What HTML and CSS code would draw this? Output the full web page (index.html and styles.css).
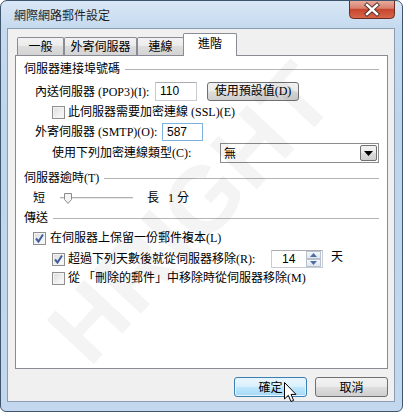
FILE: index.html
```html
<!DOCTYPE html>
<html lang="zh-Hant">
<head>
<meta charset="utf-8">
<title>網際網路郵件設定</title>
<link rel="stylesheet" href="styles.css">
</head>
<body>
<div class="window">
  <div class="titlebar">
    <span class="title">網際網路郵件設定</span>
    <div class="close">
      <svg width="46" height="19" viewBox="0 0 46 19">
        <defs>
          <linearGradient id="cg" x1="0" y1="0" x2="0" y2="1">
            <stop offset="0" stop-color="#eab1a4"/>
            <stop offset="0.45" stop-color="#d9806d"/>
            <stop offset="0.5" stop-color="#c7452d"/>
            <stop offset="1" stop-color="#d8684c"/>
          </linearGradient>
        </defs>
        <path d="M0.5 0 V14.5 a4 4 0 0 0 4 4 H41.5 a4 4 0 0 0 4 -4 V0" fill="url(#cg)" stroke="#6b2c22"/>
        <path d="M18 5 L28 14 M28 5 L18 14" stroke="#4a2a25" stroke-width="4.2" stroke-linecap="square"/>
        <path d="M18 5 L28 14 M28 5 L18 14" stroke="#ffffff" stroke-width="2.4" stroke-linecap="square"/>
      </svg>
    </div>
  </div>
  <div class="client">
    <div class="tabs">
      <div class="tab t1">一般</div>
      <div class="tab t2">外寄伺服器</div>
      <div class="tab t3">連線</div>
      <div class="tab active">進階</div>
    </div>
    <div class="panel">
      <div class="group"><span>伺服器連接埠號碼</span><i class="rule"></i></div>
      <div class="row r-in">
        <span class="lbl w-in">內送伺服器 (POP3)(I):</span>
        <div class="field f-in">110</div>
        <div class="pbtn">使用預設值(D)</div>
      </div>
      <div class="row r-ssl">
        <span class="cb"></span>
        <span class="cbt">此伺服器需要加密連線 (SSL)(E)</span>
      </div>
      <div class="row r-out">
        <span class="lbl w-out">外寄伺服器 (SMTP)(O):</span>
        <div class="field f-out">587</div>
      </div>
      <div class="row r-enc">
        <span class="lbl w-enc">使用下列加密連線類型(C):</span>
        <div class="select"><span>無</span>
          <span class="sarrow"><svg width="9" height="5" viewBox="0 0 9 5"><path d="M0 0 H9 L4.5 5 Z" fill="#000"/></svg></span>
        </div>
      </div>
      <div class="group g2"><span>伺服器逾時(T)</span><i class="rule"></i></div>
      <div class="row r-slider">
        <span class="s-short">短</span>
        <div class="slider">
          <i class="track"></i>
          <svg class="thumb" width="8" height="11" viewBox="0 0 8 11"><path d="M0.5 0.5 H7.5 V6.5 L4 10.5 L0.5 6.5 Z" fill="#f4f4f4" stroke="#8a8a8a"/></svg>
        </div>
        <span class="s-long">長</span>
        <span>1 分</span>
      </div>
      <div class="group g3"><span>傳送</span><i class="rule"></i></div>
      <div class="row r-cb1">
        <span class="cb checked"><svg width="11" height="11" viewBox="0 0 11 11"><path d="M2 5.5 L4.5 8.5 L9 1.5" fill="none" stroke="#3d5ea0" stroke-width="2"/></svg></span>
        <span class="cbt">在伺服器上保留一份郵件複本(L)</span>
      </div>
      <div class="row r-cb2">
        <span class="cb checked"><svg width="11" height="11" viewBox="0 0 11 11"><path d="M2 5.5 L4.5 8.5 L9 1.5" fill="none" stroke="#3d5ea0" stroke-width="2"/></svg></span>
        <span class="cbt w-cb2">超過下列天數後就從伺服器移除(R):</span>
        <div class="spin"><span>14</span>
          <span class="spinbtns">
            <span class="sb"><svg width="7" height="4" viewBox="0 0 7 4"><path d="M0 4 L3.5 0 L7 4 Z" fill="#4d6fa0"/></svg></span>
            <span class="sb"><svg width="7" height="4" viewBox="0 0 7 4"><path d="M0 0 L7 0 L3.5 4 Z" fill="#4d6fa0"/></svg></span>
          </span>
        </div>
        <span class="day">天</span>
      </div>
      <div class="row r-cb3">
        <span class="cb"></span>
        <span class="cbt">從 「刪除的郵件」中移除時從伺服器移除(M)</span>
      </div>
    </div>
    <div class="buttons">
      <div class="btn default">確定</div>
      <div class="btn">取消</div>
    </div>
  </div>
  <div class="watermark">HRIGHT</div>
  <svg class="cursor" width="14" height="22" viewBox="0 0 14 22"><path d="M0.5 0.5 V17 L4.3 13.3 L7 19.5 L9.6 18.4 L7 12.4 L12 12.4 Z" fill="#fff" stroke="#000" stroke-linejoin="round"/></svg>
</div>
</body>
</html>
```
FILE: styles.css
```css
* { box-sizing: border-box; }
html, body { margin: 0; padding: 0; }
body {
  width: 403px;
  height: 412px;
  overflow: hidden;
  background: #fff;
  font-family: "Liberation Serif", "Noto Sans CJK TC", serif;
  font-size: 12px;
  color: #000;
}
.window {
  position: relative;
  width: 403px;
  height: 412px;
  border: 1px solid #3f546d;
  border-radius: 7px 7px 6px 6px;
  background: linear-gradient(to bottom, #d9e7f6 0, #c6daef 26px, #bed5ec 120px, #c3d8ee 100%);
  padding: 0 7px 9px 6px;
  overflow: hidden;
}
.titlebar {
  height: 27px;
  padding-left: 7px;
  display: flex;
  align-items: center;
}
.title {
  font-family: "Noto Sans CJK TC", sans-serif;
  font-size: 12px;
  line-height: 14px;
  color: #1e1e1e;
  margin-top: 1px;
}
.close {
  position: absolute;
  top: -1px;
  right: 7px;
  width: 46px;
  height: 19px;
}
.close svg { display: block; }
.client {
  height: 374px;
  background: #f0f0f0;
  border: 1px solid #8c9db1;
  padding: 5px 0 0 7px;
}
.tabs {
  display: flex;
  align-items: flex-end;
  height: 21px;
  padding-left: 2px;
  position: relative;
  z-index: 2;
}
.tab {
  height: 18px;
  border: 1px solid #898c95;
  border-bottom: none;
  border-radius: 2px 2px 0 0;
  background: linear-gradient(to bottom, #f3f3f3 0, #ebebeb 45%, #dddddd 50%, #d4d4d4 100%);
  font-family: "Noto Sans CJK TC", sans-serif;
  line-height: 16px;
  text-align: center;
}
.t1 { width: 47px; }
.t2 { width: 73px; }
.t3 { width: 47px; }
.tab.active {
  width: 54px;
  height: 23px;
  margin-left: -1px;
  margin-bottom: -1px;
  background: #fff;
  line-height: 18px;
  position: relative;
}
.panel {
  height: 314px;
  margin-right: 6px;
  background: #fff;
  border: 1px solid #898c95;
  padding-top: 6px;
}
.group {
  display: flex;
  align-items: center;
  height: 14px;
  line-height: 14px;
  padding: 0 8px 0 8px;
}
.rule {
  flex: 1;
  height: 1px;
  background: #b5b5b5;
  margin-left: 5px;
}
.g2 { margin-top: 8px; }
.g3 { margin-top: 6px; }
.row {
  display: flex;
  align-items: center;
  line-height: 14px;
  white-space: nowrap;
}
.r-in { margin-top: 6px; height: 19px; padding-left: 19px; }
.w-in { width: 120px; }
.field {
  height: 19px;
  border: 1px solid #c8ccd2;
  border-top-color: #abadb3;
  background: #fff;
  font-family: "Liberation Sans", sans-serif;
  font-size: 12px;
  line-height: 17px;
  padding-left: 4px;
}
.f-in { width: 42px; }
.pbtn {
  width: 92px;
  height: 19px;
  margin-left: 10px;
  border: 1px solid #707070;
  border-radius: 3px;
  background: linear-gradient(to bottom, #f2f2f2 0, #ebebeb 48%, #dddddd 52%, #cfcfcf 100%);
  text-align: center;
  line-height: 17px;
}
.r-ssl { margin-top: 4px; height: 14px; padding-left: 36px; }
.cb {
  width: 13px;
  height: 13px;
  border: 1px solid #8f8f8f;
  background: linear-gradient(135deg, #dcdcdc 0, #f4f4f4 70%, #fcfcfc 100%);
  box-shadow: inset 0 0 0 1px #f4f4f4;
  display: flex;
  align-items: center;
  justify-content: center;
  flex: none;
}
.cb svg { display: block; }
.cbt { margin-left: 3px; }
.r-out { margin-top: 4px; height: 18px; padding-left: 19px; }
.w-out { width: 127px; }
.f-out { width: 41px; height: 18px; border-color: #7eb0e0; line-height: 16px; }
.r-enc { margin-top: 2px; height: 20px; padding-left: 36px; }
.w-enc { width: 168px; }
.select {
  width: 159px;
  height: 20px;
  border: 1px solid #8c8c8c;
  background: #fff;
  display: flex;
  align-items: center;
  justify-content: space-between;
  padding: 0 1px 0 3px;
  font-family: "Noto Sans CJK TC", sans-serif;
}
.sarrow {
  width: 17px;
  height: 16px;
  border: 1px solid #707070;
  border-radius: 2px;
  background: linear-gradient(to bottom, #f2f2f2 0, #ebebeb 48%, #dddddd 52%, #cfcfcf 100%);
  display: flex;
  align-items: center;
  justify-content: center;
}
.sarrow svg { display: block; }
.r-slider { margin-top: 6px; height: 14px; padding-left: 17px; }
.s-short { width: 27px; }
.slider {
  position: relative;
  width: 73px;
  height: 14px;
  margin-right: 14px;
  display: flex;
  align-items: center;
}
.track {
  display: block;
  width: 100%;
  height: 2px;
  border-top: 1px solid #b0b0b0;
  border-bottom: 1px solid #e8e8e8;
}
.thumb {
  position: absolute;
  left: 4px;
  top: 2px;
}
.s-long { width: 21px; }
.r-cb1 { margin-top: 6px; height: 14px; padding-left: 17px; }
.r-cb1 .cbt { margin-left: 4px; }
.r-cb2 { margin-top: 5px; height: 18px; padding-left: 36px; }
.w-cb2 { width: 203px; }
.spin {
  width: 52px;
  height: 18px;
  border: 1px solid #c8ccd2;
  border-top-color: #abadb3;
  background: #fff;
  display: flex;
  align-items: center;
  justify-content: space-between;
  padding: 0 1px 0 10px;
  font-family: "Liberation Sans", sans-serif;
}
.spinbtns {
  display: flex;
  flex-direction: column;
  height: 16px;
}
.sb {
  width: 15px;
  height: 8px;
  border: 1px solid #b8c2cf;
  background: linear-gradient(to bottom, #f4f7fb, #dfe6ef);
  display: flex;
  align-items: center;
  justify-content: center;
}
.sb svg { display: block; }
.day { margin-left: 8px; margin-top: -4px; }
.r-cb3 { margin-top: 3px; height: 14px; padding-left: 36px; }
.buttons {
  display: flex;
  justify-content: flex-end;
  gap: 8px;
  margin-top: 8px;
  margin-right: 6px;
}
.btn {
  width: 73px;
  height: 20px;
  border: 1px solid #707070;
  border-radius: 3px;
  background: linear-gradient(to bottom, #f2f2f2 0, #ebebeb 48%, #dddddd 52%, #cfcfcf 100%);
  text-align: center;
  line-height: 18px;
  font-family: "Noto Sans CJK TC", sans-serif;
}
.btn.default {
  border-color: #3c7fb1;
  background: linear-gradient(to bottom, #eaf6fd 0, #d9f0fc 48%, #bee6fd 52%, #a7d9f5 100%);
  box-shadow: inset 0 0 0 1px #e4f3fc;
}
.watermark {
  position: absolute;
  left: 0px;
  top: 165px;
  width: 380px;
  text-align: center;
  font-family: "Liberation Sans", sans-serif;
  font-weight: bold;
  font-size: 94px;
  line-height: 94px;
  letter-spacing: 1px;
  color: rgba(0, 0, 0, 0.045);
  transform: rotate(-47deg);
  pointer-events: none;
  z-index: 5;
}
.cursor {
  position: absolute;
  left: 283px;
  top: 381px;
  z-index: 6;
}
```
